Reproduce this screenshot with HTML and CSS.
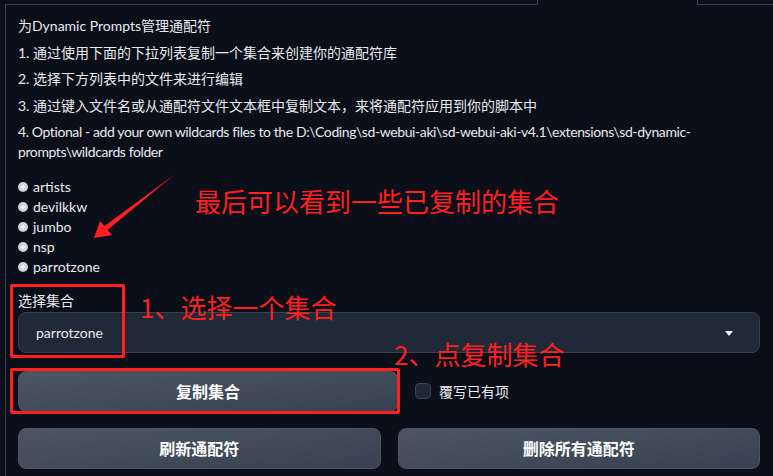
FILE: index.html
```html
<!DOCTYPE html>
<html lang="zh-CN">
<head>
    <meta charset="UTF-8">
    <meta name="viewport" content="width=device-width, initial-scale=1.0">
    <title>Wildcards Manager</title>
    <link rel="stylesheet" href="styles.css">
</head>
<body>

    <div class="tabbar">
        <div class="tab-line"></div>
        <div class="tab-active"></div>
        <div class="tab-line rest"></div>
    </div>

    <div class="panel">
        <div class="intro">
            <p>为Dynamic Prompts管理通配符</p>
            <p>1. 通过使用下面的下拉列表复制一个集合来创建你的通配符库</p>
            <p>2. 选择下方列表中的文件来进行编辑</p>
            <p>3. 通过键入文件名或从通配符文件文本框中复制文本，来将通配符应用到你的脚本中</p>
            <p class="path">4. Optional - add your own wildcards files to the D:\Coding\sd-webui-aki\sd-webui-aki-v4.1\extensions\sd-dynamic-<br>prompts\wildcards folder</p>
        </div>

        <ul class="tree">
            <li><span class="node-icon"><svg width="10" height="10" viewBox="0 0 10 10"><circle cx="5" cy="5" r="5" fill="#cfd3d9"/><path d="M5 2.5v5M2.5 5h5" stroke="#f5f6f8" stroke-width="1.4"/></svg></span>artists</li>
            <li><span class="node-icon"><svg width="10" height="10" viewBox="0 0 10 10"><circle cx="5" cy="5" r="5" fill="#cfd3d9"/><path d="M5 2.5v5M2.5 5h5" stroke="#f5f6f8" stroke-width="1.4"/></svg></span>devilkkw</li>
            <li><span class="node-icon"><svg width="10" height="10" viewBox="0 0 10 10"><circle cx="5" cy="5" r="5" fill="#cfd3d9"/><path d="M5 2.5v5M2.5 5h5" stroke="#f5f6f8" stroke-width="1.4"/></svg></span>jumbo</li>
            <li><span class="node-icon"><svg width="10" height="10" viewBox="0 0 10 10"><circle cx="5" cy="5" r="5" fill="#cfd3d9"/><path d="M5 2.5v5M2.5 5h5" stroke="#f5f6f8" stroke-width="1.4"/></svg></span>nsp</li>
            <li><span class="node-icon"><svg width="10" height="10" viewBox="0 0 10 10"><circle cx="5" cy="5" r="5" fill="#cfd3d9"/><path d="M5 2.5v5M2.5 5h5" stroke="#f5f6f8" stroke-width="1.4"/></svg></span>parrotzone</li>
        </ul>

        <div class="field">
            <div class="field-label">选择集合</div>
            <div class="dropdown">
                <span>parrotzone</span>
                <svg class="caret" width="8" height="5" viewBox="0 0 8 5"><path d="M0 0h8L4 5z" fill="#f3f4f6"/></svg>
            </div>
        </div>

        <div class="row first-row">
            <button class="btn">复制集合</button>
            <label class="check">
                <span class="check-box"></span>
                <span>覆写已有项</span>
            </label>
        </div>

        <div class="row second-row">
            <button class="btn">刷新通配符</button>
            <button class="btn">删除所有通配符</button>
        </div>
    </div>

    <!-- annotations drawn over the screenshot -->
    <svg class="note-arrow" width="773" height="476" viewBox="0 0 773 476">
        <polygon points="174,175 107.5,230 112,235 94,238 100,221 104.5,226" fill="#ff1f1f"/>
    </svg>
    <div class="note note-top">最后可以看到一些已复制的集合</div>
    <div class="note note-one">1、选择一个集合</div>
    <div class="note note-two">2、点复制集合</div>
    <div class="mark mark-one"></div>
    <div class="mark mark-two"></div>

</body>
</html>
```

FILE: styles.css
```css
        body {
            margin: 0;
            background-color: #0b0f19;
            color: #e8eaed;
            font-family: 'Lato', 'Noto Sans CJK SC', sans-serif;
            font-size: 14px;
            width: 773px;
            height: 476px;
            overflow: hidden;
            position: relative;
        }

        .tabbar {
            display: flex;
            height: 5px;
            margin-left: 5px;
        }

        .tab-line {
            width: 532px;
            border-bottom: 1px solid #374151;
        }

        .tab-line.rest {
            flex: 1;
        }

        .tab-active {
            width: 159px;
            border-left: 1px solid #374151;
            border-right: 1px solid #374151;
        }

        .panel {
            margin-left: 5px;
            border-left: 1px solid #374151;
            padding: 11px 13px 0 12px;
            height: 471px;
            box-sizing: border-box;
        }

        .intro p {
            margin: 0 0 7px 0;
            line-height: 1.4;
        }

        .intro .path {
            white-space: nowrap;
            letter-spacing: -0.4px;
        }

        .tree {
            list-style: none;
            margin: 15px 0 0 0;
            padding: 0;
        }

        .tree li {
            display: flex;
            align-items: center;
            height: 20px;
        }

        .node-icon {
            display: flex;
            width: 10px;
            height: 10px;
            margin-right: 5px;
        }

        .field {
            margin-top: 14px;
        }

        .field-label {
            line-height: 20px;
        }

        .dropdown {
            margin-top: 1px;
            height: 41px;
            box-sizing: border-box;
            display: flex;
            align-items: center;
            justify-content: space-between;
            padding: 0 26px 0 17px;
            background-color: #1f2937;
            border: 1px solid #374151;
            border-radius: 8px;
        }

        .caret {
            margin-top: 2px;
        }

        .row {
            display: grid;
            gap: 17px;
        }

        .first-row {
            margin-top: 18px;
            grid-template-columns: 380px 1fr;
        }

        .second-row {
            margin-top: 16px;
            grid-template-columns: 1fr 1fr;
        }

        .btn {
            height: 41px;
            border: 1px solid #4b5563;
            border-radius: 8px;
            background: linear-gradient(to bottom right, #4b5563, #374151);
            color: #ffffff;
            font-family: 'Lato', 'Noto Sans CJK SC', sans-serif;
            font-size: 16px;
            font-weight: bold;
        }

        .check {
            display: flex;
            align-items: center;
            gap: 8px;
        }

        .check-box {
            width: 16px;
            height: 16px;
            box-sizing: border-box;
            background-color: #1f2937;
            border: 1px solid #374151;
            border-radius: 4px;
        }

        .note-arrow {
            position: absolute;
            left: 0;
            top: 0;
        }

        .note {
            position: absolute;
            color: #ff1f1f;
            font-family: 'Noto Sans CJK SC', sans-serif;
            font-size: 26px;
            line-height: 26px;
            white-space: nowrap;
        }

        .note-top {
            left: 195px;
            top: 188px;
        }

        .note-one {
            left: 140px;
            top: 294px;
        }

        .note-two {
            left: 394px;
            top: 341px;
        }

        .mark {
            position: absolute;
            border: 3px solid #ff1f1f;
            border-radius: 2px;
            box-sizing: border-box;
        }

        .mark-one {
            left: 10px;
            top: 284px;
            width: 115px;
            height: 74px;
        }

        .mark-two {
            left: 10px;
            top: 368px;
            width: 390px;
            height: 46px;
        }
```
